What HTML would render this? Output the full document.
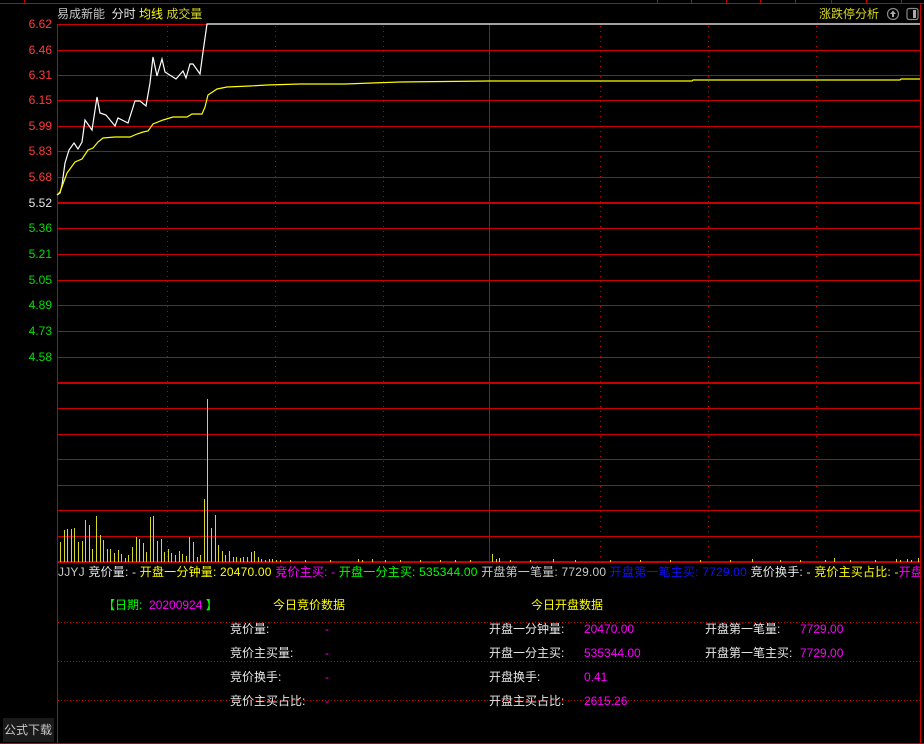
<!DOCTYPE html>
<html><head><meta charset="utf-8">
<style>
html,body{margin:0;padding:0;background:#000;width:924px;height:744px;overflow:hidden}
body{position:relative;font-family:"Liberation Sans","Noto Sans CJK SC","WenQuanYi Zen Hei",sans-serif;font-size:12px}
.t{position:absolute;white-space:nowrap;line-height:14px}
.ax{position:absolute;right:872px;font-size:12px;line-height:12px}
.r{color:#ff3c3c}.g{color:#00e000}.w{color:#e8e8e8}.y{color:#ffff00}.m{color:#ff00ff}.b{color:#1010ff}.gr{color:#00ff00}
</style></head><body>
<svg width="924" height="744" style="position:absolute;left:0;top:0" shape-rendering="crispEdges">
<g fill="#c80000">
<rect x="0" y="3" width="924" height="1"/>
<rect x="24" y="0" width="1" height="4"/>
<rect x="657" y="0" width="1" height="4"/><rect x="691" y="0" width="1" height="4"/><rect x="726" y="0" width="1" height="4"/><rect x="760" y="0" width="1" height="4"/><rect x="795" y="0" width="1" height="4"/><rect x="831" y="0" width="1" height="4"/><rect x="866" y="0" width="1" height="4"/><rect x="901" y="0" width="1" height="4"/>
<rect x="57" y="24" width="1" height="720"/>
<rect x="920" y="4" width="1" height="740"/>
<rect x="0" y="743" width="924" height="1"/>
<rect x="489" y="24" width="1" height="538"/>
<rect x="57" y="50" width="864" height="1"/><rect x="57" y="75" width="864" height="1"/><rect x="57" y="100" width="864" height="1"/><rect x="57" y="126" width="864" height="1"/><rect x="57" y="151" width="864" height="1"/><rect x="57" y="177" width="864" height="1"/>
<rect x="57" y="202" width="864" height="2"/>
<rect x="57" y="228" width="864" height="1"/><rect x="57" y="254" width="864" height="1"/><rect x="57" y="280" width="864" height="1"/><rect x="57" y="305" width="864" height="1"/><rect x="57" y="331" width="864" height="1"/><rect x="57" y="357" width="864" height="1"/>
<rect x="57" y="382" width="864" height="2"/>
<rect x="57" y="408" width="864" height="1"/><rect x="57" y="434" width="864" height="1"/><rect x="57" y="459" width="864" height="1"/><rect x="57" y="485" width="864" height="1"/><rect x="57" y="510" width="864" height="1"/><rect x="57" y="536" width="864" height="1"/>
<rect x="57" y="561" width="864" height="2"/>
<rect x="57" y="24" width="150" height="1"/>
</g>
<g stroke="#c80000" stroke-width="1" stroke-dasharray="1,4">
<line x1="167.5" y1="26" x2="167.5" y2="561"/><line x1="275.5" y1="26" x2="275.5" y2="561"/><line x1="383.5" y1="26" x2="383.5" y2="561"/><line x1="600.5" y1="26" x2="600.5" y2="561"/><line x1="708.5" y1="26" x2="708.5" y2="561"/><line x1="816.5" y1="26" x2="816.5" y2="561"/>
<line x1="58" y1="622.5" x2="920" y2="622.5" stroke-dasharray="1,2"/>
<line x1="58" y1="661.5" x2="920" y2="661.5" stroke-dasharray="1,2"/>
<line x1="58" y1="700.5" x2="920" y2="700.5" stroke-dasharray="1,2"/>
</g>
<g shape-rendering="auto">
<polyline fill="none" stroke="#fff" stroke-width="1.2" points="57,195 60,193 62,185 65,163 69,150 74,143 78,149 82,142 85,120 92,130 97,97 100,113 106,115 115,126 118,118 128,123 135,101 140,101 146,106 150,83 153,57 157,76 162,59 165,72 176,79 183,71 186,78 190,64 193,64 200,74 203,52 207,24 920,24"/>
<polyline fill="none" stroke="#ffff00" stroke-width="1.2" points="57,195 60,192 67,173 75,162 82,159 88,150 93,148 98,142 103,138 115,137 130,137 137,134 143,132 148,131 153,124 163,120 173,117 187,117 192,114 202,114 205,107 208,95 217,89 227,87 250,86 267,85 300,84 345,84 400,82 489,81 692,81 693,80 900,80 901,79 920,79"/>
</g>
<g fill="#d8d820">
<rect x="60" y="542" width="1" height="20"/><rect x="64" y="530" width="1" height="32"/><rect x="67" y="529" width="1" height="33"/><rect x="71" y="529" width="1" height="33"/><rect x="74" y="528" width="1" height="34"/><rect x="78" y="542" width="1" height="20"/><rect x="82" y="541" width="1" height="21"/><rect x="85" y="520" width="1" height="42"/><rect x="89" y="525" width="1" height="37"/><rect x="92" y="549" width="1" height="13"/><rect x="96" y="516" width="1" height="46"/><rect x="100" y="535" width="1" height="27"/><rect x="103" y="540" width="1" height="22"/><rect x="107" y="549" width="1" height="13"/><rect x="110" y="549" width="1" height="13"/><rect x="114" y="553" width="1" height="9"/><rect x="118" y="550" width="1" height="12"/><rect x="121" y="554" width="1" height="8"/><rect x="125" y="558" width="1" height="4"/><rect x="128" y="555" width="1" height="7"/><rect x="132" y="547" width="1" height="15"/><rect x="136" y="537" width="1" height="25"/><rect x="139" y="539" width="1" height="23"/><rect x="143" y="543" width="1" height="19"/><rect x="146" y="552" width="1" height="10"/><rect x="150" y="517" width="1" height="45"/><rect x="153" y="516" width="1" height="46"/><rect x="157" y="541" width="1" height="21"/><rect x="161" y="539" width="1" height="23"/><rect x="164" y="552" width="1" height="10"/><rect x="168" y="549" width="1" height="13"/><rect x="171" y="553" width="1" height="9"/><rect x="175" y="555" width="1" height="7"/><rect x="179" y="551" width="1" height="11"/><rect x="182" y="554" width="1" height="8"/><rect x="186" y="556" width="1" height="6"/><rect x="189" y="537" width="1" height="25"/><rect x="193" y="542" width="1" height="20"/><rect x="197" y="557" width="1" height="5"/><rect x="200" y="555" width="1" height="7"/><rect x="204" y="499" width="1" height="63"/><rect x="207" y="399" width="1" height="163"/><rect x="211" y="528" width="1" height="34"/><rect x="215" y="515" width="1" height="47"/><rect x="218" y="545" width="1" height="17"/><rect x="222" y="551" width="1" height="11"/><rect x="225" y="555" width="1" height="7"/><rect x="229" y="551" width="1" height="11"/><rect x="233" y="557" width="1" height="5"/><rect x="236" y="557" width="1" height="5"/><rect x="240" y="558" width="1" height="4"/><rect x="243" y="557" width="1" height="5"/><rect x="247" y="557" width="1" height="5"/><rect x="251" y="552" width="1" height="10"/><rect x="254" y="551" width="1" height="11"/><rect x="258" y="557" width="1" height="5"/><rect x="261" y="559" width="1" height="3"/><rect x="265" y="560" width="1" height="2"/><rect x="269" y="559" width="1" height="3"/><rect x="272" y="559" width="1" height="3"/><rect x="276" y="560" width="1" height="2"/><rect x="280" y="560" width="1" height="2"/><rect x="290" y="560" width="1" height="2"/><rect x="305" y="560" width="1" height="2"/><rect x="330" y="560" width="1" height="2"/><rect x="358" y="559" width="1" height="3"/><rect x="362" y="560" width="1" height="2"/><rect x="372" y="559" width="1" height="3"/><rect x="385" y="560" width="1" height="2"/><rect x="400" y="560" width="1" height="2"/><rect x="420" y="560" width="1" height="2"/><rect x="440" y="560" width="1" height="2"/><rect x="455" y="560" width="1" height="2"/><rect x="470" y="560" width="1" height="2"/><rect x="492" y="554" width="1" height="8"/><rect x="496" y="559" width="1" height="3"/><rect x="499" y="558" width="1" height="4"/><rect x="510" y="560" width="1" height="2"/><rect x="530" y="560" width="1" height="2"/><rect x="553" y="559" width="1" height="3"/><rect x="575" y="560" width="1" height="2"/><rect x="610" y="560" width="1" height="2"/><rect x="640" y="560" width="1" height="2"/><rect x="670" y="560" width="1" height="2"/><rect x="700" y="560" width="1" height="2"/><rect x="730" y="560" width="1" height="2"/><rect x="752" y="559" width="1" height="3"/><rect x="780" y="560" width="1" height="2"/><rect x="800" y="560" width="1" height="2"/><rect x="825" y="560" width="1" height="2"/><rect x="834" y="558" width="1" height="4"/><rect x="850" y="560" width="1" height="2"/><rect x="875" y="560" width="1" height="2"/><rect x="896" y="559" width="1" height="3"/><rect x="900" y="560" width="1" height="2"/><rect x="907" y="559" width="1" height="3"/><rect x="911" y="560" width="1" height="2"/><rect x="918" y="558" width="1" height="4"/>
</g>
<rect x="3" y="718" width="51" height="24" fill="#1a1a1a"/>
<g shape-rendering="auto">
<circle cx="893" cy="14" r="5.5" fill="none" stroke="#888" stroke-width="1.2"/>
<path d="M893 10.5 L890 14 L892 14 L892 17 L894 17 L894 14 L896 14 Z" fill="#aaa"/>
<rect x="907" y="8.5" width="11" height="11" rx="2" fill="none" stroke="#888" stroke-width="1.2"/>
<rect x="913" y="10" width="3" height="8" fill="#aaa"/>
</g>
</svg>
<div class="t" style="left:57px;top:7px;color:#c8c8c8">易成新能 &nbsp;<span class="w">分时</span> <span class="y">均线</span> <span style="color:#d8d820">成交量</span></div>
<div class="t" style="left:819px;top:7px;color:#d8d820">涨跌停分析</div>
<div class="ax r" style="top:18px">6.62</div>
<div class="ax r" style="top:44px">6.46</div>
<div class="ax r" style="top:69px">6.31</div>
<div class="ax r" style="top:94px">6.15</div>
<div class="ax r" style="top:120px">5.99</div>
<div class="ax r" style="top:145px">5.83</div>
<div class="ax r" style="top:171px">5.68</div>
<div class="ax w" style="top:197px">5.52</div>
<div class="ax g" style="top:222px">5.36</div>
<div class="ax g" style="top:248px">5.21</div>
<div class="ax g" style="top:274px">5.05</div>
<div class="ax g" style="top:299px">4.89</div>
<div class="ax g" style="top:325px">4.73</div>
<div class="ax g" style="top:351px">4.58</div>
<div class="t" style="left:58px;top:565px;color:#c8c8c8;letter-spacing:0.2px;width:862px;overflow:hidden">JJYJ <span class="w">竞价量: -</span> <span class="y">开盘一分钟量: 20470.00</span> <span class="m">竞价主买: -</span> <span class="gr">开盘一分主买: 535344.00</span> <span style="color:#c8c8c8">开盘第一笔量: 7729.00</span> <span class="b">开盘第一笔主买: 7729.00</span> <span class="w">竞价换手: -</span> <span class="y">竞价主买占比: -</span><span class="m">开盘</span></div>
<div class="t" style="left:103px;top:598px"><span class="gr">【日期: &nbsp;</span><span class="m">20200924</span><span class="gr"> 】</span></div>
<div class="t y" style="left:273px;top:598px">今日竞价数据</div>
<div class="t y" style="left:531px;top:598px">今日开盘数据</div>
<div class="t w" style="left:230px;top:622px">竞价量:</div><div class="t m" style="left:325px;top:622px">-</div>
<div class="t w" style="left:230px;top:646px">竞价主买量:</div><div class="t m" style="left:325px;top:646px">-</div>
<div class="t w" style="left:230px;top:670px">竞价换手:</div><div class="t m" style="left:325px;top:670px">-</div>
<div class="t w" style="left:230px;top:694px">竞价主买占比:</div><div class="t m" style="left:325px;top:694px">-</div>
<div class="t w" style="left:489px;top:622px">开盘一分钟量:</div><div class="t m" style="left:584px;top:622px">20470.00</div>
<div class="t w" style="left:489px;top:646px">开盘一分主买:</div><div class="t m" style="left:584px;top:646px">535344.00</div>
<div class="t w" style="left:489px;top:670px">开盘换手:</div><div class="t m" style="left:584px;top:670px">0.41</div>
<div class="t w" style="left:489px;top:694px">开盘主买占比:</div><div class="t m" style="left:584px;top:694px">2615.26</div>
<div class="t w" style="left:705px;top:622px">开盘第一笔量:</div><div class="t m" style="left:800px;top:622px">7729.00</div>
<div class="t w" style="left:705px;top:646px">开盘第一笔主买:</div><div class="t m" style="left:800px;top:646px">7729.00</div>
<div class="t" style="left:4px;top:723px;color:#c8c8c8">公式下载</div>
</body></html>
